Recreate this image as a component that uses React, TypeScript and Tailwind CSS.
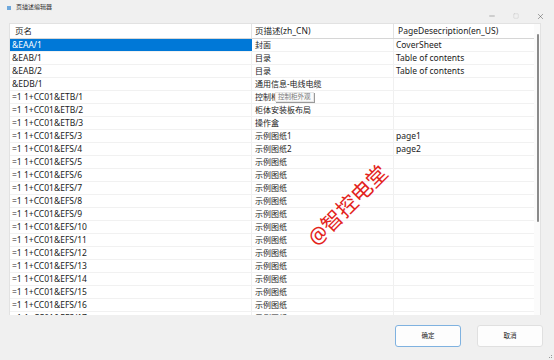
import { Minus, Square, X } from "lucide-react";

type Row = {
  name: string;
  zh: string;
  en: string;
};

const rows: Row[] = [
  { name: "&EAA/1", zh: "封面", en: "CoverSheet" },
  { name: "&EAB/1", zh: "目录", en: "Table of contents" },
  { name: "&EAB/2", zh: "目录", en: "Table of contents" },
  { name: "&EDB/1", zh: "通用信息-电线电缆", en: "" },
  { name: "=1 1+CC01&ETB/1", zh: "控制柜外观", en: "" },
  { name: "=1 1+CC01&ETB/2", zh: "柜体安装板布局", en: "" },
  { name: "=1 1+CC01&ETB/3", zh: "操作盒", en: "" },
  { name: "=1 1+CC01&EFS/3", zh: "示例图纸1", en: "page1" },
  { name: "=1 1+CC01&EFS/4", zh: "示例图纸2", en: "page2" },
  ...Array.from({ length: 13 }, (_, i) => ({
    name: `=1 1+CC01&EFS/${i + 5}`,
    zh: "示例图纸",
    en: "",
  })),
];

const font = { fontFamily: '"Noto Sans", "Noto Sans CJK SC", sans-serif' };

const App = () => {
  return (
    <div
      className="relative w-[554px] h-[360px] bg-[#f0f0f0] overflow-hidden text-[#1b1b1b]"
      style={font}
    >
      {/* title bar */}
      <div className="flex h-[23px]">
        <div className="flex items-start gap-[5px] pl-[7px] pt-[3px]">
          <div className="mt-[3px] w-[4px] h-[4px] bg-[#6ea8dc]" />
          <span className="text-[6px] leading-[9px] text-[#333]">页描述编辑器</span>
        </div>
        <div className="ml-auto flex items-center gap-[17px] pr-[9px] pt-[9px] text-[#444]">
          <Minus size={8} strokeWidth={1.2} />
          <Square size={6} strokeWidth={1.2} className="text-[#b5b5b5]" />
          <X size={9} strokeWidth={1.2} />
        </div>
      </div>

      {/* table */}
      <div className="ml-[9px] w-[532px] h-[292px] bg-white border border-[#e2e2e2] border-b-0 flex overflow-hidden">
        <div className="w-[524px] flex flex-col">
          <div className="flex h-[15px] shrink-0 border-b border-[#d6d6d6] text-[8.5px] leading-[14px]">
            <div className="w-[242px] pl-[5px] border-r border-[#e3e3e3]">页名</div>
            <div className="w-[142px] pl-[3px] border-r border-[#e3e3e3]">页描述(zh_CN)</div>
            <div className="w-[140px] pl-[4px]">PageDesecription(en_US)</div>
          </div>
          {rows.map((row, i) => (
            <div
              key={row.name}
              className="relative flex h-[13px] shrink-0 border-b border-[#f1f1f1] text-[8.5px] leading-[12px]"
            >
              <div
                className={
                  i === 0
                    ? "w-[242px] pl-[2px] bg-[#0078d7] text-white"
                    : "w-[242px] pl-[2px] border-r border-[#f0f0f0]"
                }
              >
                {row.name}
              </div>
              <div className="w-[142px] pl-[3px] border-r border-[#f0f0f0] text-[8px]">{row.zh}</div>
              <div className="w-[140px] pl-[2px]">{row.en}</div>
              {i === 4 && (
                <div className="absolute left-[265px] top-[1px] h-[10px] px-[2px] bg-[#fafafa] border border-[#e6e6e6] shadow-[1px_1px_0_#9a9a9a] text-[6.5px] leading-[8px] text-[#777]">
                  控制柜外观
                </div>
              )}
            </div>
          ))}
        </div>
        <div className="w-[8px] bg-[#fbfbfb] pt-[10px] pl-[3px]">
          <div className="w-[2px] h-[188px] rounded-full bg-[#8a8a8a]" />
        </div>
      </div>

      {/* buttons */}
      <div className="flex justify-end gap-[16px] pr-[11px] mt-[10px]">
        <button className="w-[66px] h-[22px] rounded-[3px] bg-[#fdfdfd] border border-[#7fb2e0] text-[6.5px] text-[#222]">
          确定
        </button>
        <button className="w-[66px] h-[22px] rounded-[3px] bg-[#fdfdfd] border border-[#e0e0e0] text-[6.5px] text-[#222]">
          取消
        </button>
      </div>

      {/* resize grip */}
      <div className="absolute right-[2px] bottom-[2px] grid grid-cols-2 gap-[1px]">
        <span className="w-[1px] h-[1px]" />
        <span className="w-[1px] h-[1px] bg-[#999]" />
        <span className="w-[1px] h-[1px] bg-[#999]" />
        <span className="w-[1px] h-[1px] bg-[#999]" />
      </div>

      {/* watermark */}
      <div className="absolute left-[296px] top-[193px] -rotate-45 text-[21px] leading-[24px] text-[#e3231c] whitespace-nowrap [text-shadow:0_0_1px_#fff]">
        @智控电堂
      </div>
    </div>
  );
};

export default App;
